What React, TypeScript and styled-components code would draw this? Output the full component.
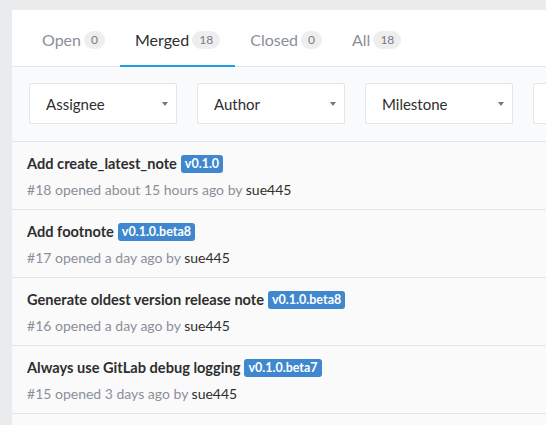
import React from "react";
import styled, { createGlobalStyle } from "styled-components";

const GlobalStyle = createGlobalStyle`
  body {
    margin: 0;
    background: #eaebed;
    font-family: "Lato", "Noto Sans", sans-serif;
  }
`;

const tabs = [
  { name: "Open", count: 0 },
  { name: "Merged", count: 18, active: true },
  { name: "Closed", count: 0 },
  { name: "All", count: 18 },
];

const filters = ["Assignee", "Author", "Milestone", ""];

const requests = [
  { title: "Add create_latest_note", tag: "v0.1.0", id: 18, when: "about 15 hours ago" },
  { title: "Add footnote", tag: "v0.1.0.beta8", id: 17, when: "a day ago" },
  { title: "Generate oldest version release note", tag: "v0.1.0.beta8", id: 16, when: "a day ago" },
  { title: "Always use GitLab debug logging", tag: "v0.1.0.beta7", id: 15, when: "3 days ago" },
];

function App() {
  return (
    <>
      <GlobalStyle />
      <Page>
        <TabBar>
          {tabs.map((t) => (
            <Tab key={t.name} $active={!!t.active}>
              {t.name}
              <Badge>{t.count}</Badge>
            </Tab>
          ))}
        </TabBar>
        <FilterBar>
          {filters.map((f, i) => (
            <Dropdown key={i}>
              {f}
              <Caret />
            </Dropdown>
          ))}
        </FilterBar>
        <List>
          {requests.map((r) => (
            <Row key={r.id}>
              <Title>
                {r.title}
                <Tag>{r.tag}</Tag>
              </Title>
              <Meta>
                #{r.id} opened {r.when} by <Author>sue445</Author>
              </Meta>
            </Row>
          ))}
        </List>
      </Page>
    </>
  );
}

const Page = styled.div`
  margin: 10px 0 0 12px;
  background: #fafafa;
  height: 415px;
  overflow: hidden;
`;

const TabBar = styled.div`
  display: flex;
  height: 56px;
  padding-left: 15px;
  background: #fff;
  border-bottom: 1px solid #e5e5e5;
`;

const Tab = styled.div<{ $active: boolean }>`
  display: flex;
  align-items: center;
  padding: 4px 15px 0;
  font-size: 16px;
  color: ${(p) => (p.$active ? "#2e2e2e" : "#8a8f99")};
  border-bottom: 2px solid ${(p) => (p.$active ? "#1f9fe8" : "transparent")};
  margin-bottom: -1px;
`;

const Badge = styled.span`
  margin-left: 3px;
  padding: 1px 7px;
  border-radius: 10px;
  background: #eeeeee;
  color: #777c86;
  font-size: 12px;
  line-height: 16px;
`;

const FilterBar = styled.div`
  display: flex;
  gap: 20px;
  padding: 16px 17px 17px;
  background: #f9fafb;
  border-bottom: 1px solid #e5e5e5;
  white-space: nowrap;
`;

const Dropdown = styled.div`
  flex: 0 0 148px;
  box-sizing: border-box;
  height: 41px;
  display: flex;
  align-items: center;
  justify-content: space-between;
  padding: 0 8px 0 16px;
  background: #fff;
  border: 1px solid #e5e5e5;
  border-radius: 2px;
  font-size: 15px;
  color: #2e2e2e;
`;

const Caret = styled.span`
  width: 0;
  height: 0;
  border-left: 3px solid transparent;
  border-right: 3px solid transparent;
  border-top: 4px solid #777;
`;

const List = styled.div``;

const Row = styled.div`
  height: 68px;
  box-sizing: border-box;
  padding: 12px 15px 0;
  border-bottom: 1px solid #e5e5e5;
`;

const Title = styled.div`
  font-size: 14.6px;
  font-weight: 700;
  color: #2e2e2e;
  line-height: 20px;
  display: flex;
  align-items: center;
`;

const Tag = styled.span`
  margin-left: 4px;
  padding: 0 4px;
  background: #3f88cf;
  color: #fff;
  border-radius: 3px;
  font-size: 12.5px;
  font-weight: 700;
  line-height: 18px;
`;

const Meta = styled.div`
  margin-top: 7px;
  font-size: 14px;
  color: #8a8f99;
`;

const Author = styled.span`
  color: #2e2e2e;
`;

export default App;
